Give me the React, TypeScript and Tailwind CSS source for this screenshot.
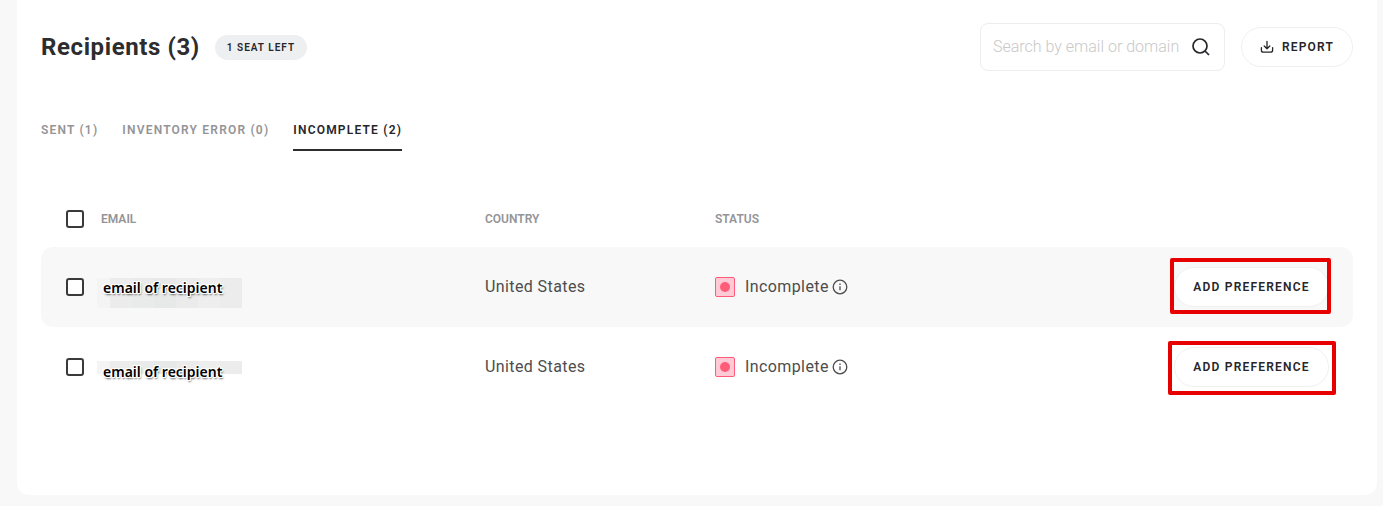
import { useState } from "react";
import clsx from "clsx";

interface Tab {
  id: string;
  label: string;
  count: number;
}

interface Recipient {
  id: number;
  email: string;
  country: string;
  status: string;
  /** Placement of the redaction strip behind the email. */
  mask: string;
  /** Extra shift of the caption that covers the masked email. */
  caption: string;
  /** Placement of the red callout around the row's button. */
  callout: string;
}

const TABS: Tab[] = [
  { id: "sent", label: "Sent", count: 1 },
  { id: "inventory", label: "Inventory error", count: 0 },
  { id: "incomplete", label: "Incomplete", count: 2 },
];

const RECIPIENTS: Recipient[] = [
  {
    id: 1,
    email: "email of recipient",
    country: "United States",
    status: "Incomplete",
    mask: "top-[31px] h-[30px]",
    caption: "pt-[2px]",
    callout: "-top-[9px] -bottom-[7px] -left-1 -right-[2px]",
  },
  {
    id: 2,
    email: "email of recipient",
    country: "United States",
    status: "Incomplete",
    mask: "top-[34px] h-[13px]",
    caption: "pt-[10px]",
    callout: "-top-[6px] -bottom-[8px] -left-[6px] -right-[7px]",
  },
];

const MASK_BLOCKS = [
  "w-[13px] bg-[#f4f4f4]",
  "w-[22px] bg-[#ececec]",
  "w-[22px] bg-[#e9ebea]",
  "w-[22px] bg-[#e7e8e8]",
  "w-[22px] bg-[#ebebeb]",
  "w-[22px] bg-[#eeeeee]",
  "w-[22px] bg-[#ececec]",
];

// White outline plus a soft drop shadow under the caption.
const CAPTION_SHADOW =
  "[text-shadow:1px_0_0_#fff,-1px_0_0_#fff,0_1px_0_#fff,0_-1px_0_#fff,1px_1px_0_#fff,-1px_1px_0_#fff,1px_-1px_0_#fff,-1px_-1px_0_#fff,1px_2px_2px_#555]";

function Checkbox({ label }: { label: string }) {
  return (
    <input
      type="checkbox"
      aria-label={label}
      className="block size-[18px] appearance-none rounded-[3px] border-2 border-[#3a393c] bg-white checked:bg-[#2d2c2f]"
    />
  );
}

function SearchIcon() {
  return (
    <svg viewBox="0 0 18 18" className="size-[18px]" fill="none" stroke="#262529" strokeWidth="1.7" aria-hidden>
      <circle cx="8" cy="8" r="7" />
      <path d="M13 13l4 4" />
    </svg>
  );
}

function DownloadIcon() {
  return (
    <svg
      viewBox="0 0 14 14"
      className="size-[14px]"
      fill="none"
      stroke="#262529"
      strokeWidth="1.3"
      strokeLinecap="round"
      strokeLinejoin="round"
      aria-hidden
    >
      <path d="M7 1.5v7M4.2 6L7 8.7 9.8 6M1.4 7.6v2.6a2 2 0 002 2h7.2a2 2 0 002-2V7.6" />
    </svg>
  );
}

function InfoIcon() {
  return (
    <svg viewBox="0 0 16 16" className="size-4" fill="none" stroke="#4d4d4d" strokeWidth="1.3" aria-hidden>
      <circle cx="8" cy="8" r="6.8" />
      <path d="M8 7.2v4.1M8 4.6v1.5" />
    </svg>
  );
}

function StatusMark() {
  return (
    <span className="grid size-5 place-items-center rounded-xs border border-[#ff5c7a] bg-[#ffcad6]">
      <span className="size-[10px] rounded-full bg-[#ff5c78]" />
    </span>
  );
}

function RecipientRow({ recipient }: { recipient: Recipient }) {
  return (
    <tr className="h-20 odd:bg-[#f8f8f8]">
      <td className="rounded-l-xl pl-[25px]">
        <Checkbox label={`Select recipient ${recipient.id}`} />
      </td>
      <td className="relative">
        <span aria-hidden className={clsx("absolute -left-1 flex", recipient.mask)}>
          {MASK_BLOCKS.map((block, i) => (
            <span key={i} className={block} />
          ))}
        </span>
        <span
          className={clsx(
            "relative block pl-[2px] font-['Noto_Sans','Open_Sans',sans-serif] text-sm font-semibold tracking-normal text-black",
            CAPTION_SHADOW,
            recipient.caption,
          )}
        >
          {recipient.email}
        </span>
      </td>
      <td>{recipient.country}</td>
      <td>
        <div className="flex items-center">
          <StatusMark />
          <span className="ml-[10px]">{recipient.status}</span>
          <button type="button" aria-label="Status details" className="ml-[3px]">
            <InfoIcon />
          </button>
        </div>
      </td>
      <td className="rounded-r-xl pr-6">
        <div className="relative ml-auto w-[155px]">
          <button
            type="button"
            className="h-10 w-full rounded-full border border-[#f0f0f0] bg-white text-xs font-semibold tracking-widest text-[#262529] uppercase"
          >
            Add preference
          </button>
          <span
            aria-hidden
            className={clsx("pointer-events-none absolute rounded-xs border-4 border-[#e60000]", recipient.callout)}
          />
        </div>
      </td>
    </tr>
  );
}

export default function App() {
  const [activeTab, setActiveTab] = useState("incomplete");
  const [query, setQuery] = useState("");

  return (
    <main className="min-h-screen bg-[#f8f8f8] pr-[6px] pb-[11px] pl-[17px] font-[Roboto,sans-serif] text-[#4d4d4d]">
      <section className="rounded-b-xl bg-white px-6 pt-[23px] pb-[88px]">
        <header className="flex items-center">
          <h1 className="text-2xl font-bold tracking-wide text-[#2d2c2f]">Recipients (3)</h1>
          <span className="ml-[15px] rounded-full bg-[#eeeff1] px-3 text-[10px] leading-[25px] font-semibold tracking-widest text-[#262529] uppercase">
            1 seat left
          </span>
          <label className="ml-auto flex h-12 w-[245px] items-center rounded-lg border border-[#ededed] pr-[14px] pl-3">
            <input
              type="text"
              aria-label="Search by email or domain"
              placeholder="Search by email or domain"
              value={query}
              onChange={(e) => setQuery(e.target.value)}
              className="min-w-0 flex-1 text-base font-light outline-none placeholder:text-[#c8c8c8]"
            />
            <SearchIcon />
          </label>
          <button
            type="button"
            className="ml-4 flex h-10 w-28 items-center justify-center gap-2 rounded-full border border-[#f0f0f0] text-xs font-semibold tracking-widest text-[#262529] uppercase"
          >
            <DownloadIcon />
            Report
          </button>
        </header>

        <nav role="tablist" className="mt-[49px] flex gap-6">
          {TABS.map((tab) => (
            <button
              key={tab.id}
              type="button"
              role="tab"
              aria-selected={tab.id === activeTab}
              onClick={() => setActiveTab(tab.id)}
              className={clsx(
                "border-b-2 pb-[9px] text-xs leading-5 font-semibold tracking-widest uppercase",
                tab.id === activeTab ? "border-[#2d2c2f] text-[#262529]" : "border-transparent text-[#949497]",
              )}
            >
              {tab.label} ({tab.count})
            </button>
          ))}
        </nav>

        <table className="mt-10 w-full table-fixed border-separate border-spacing-0 text-left">
          <thead>
            <tr className="h-14 text-xs text-[#949497] uppercase">
              <th className="w-[60px] pl-[25px]">
                <Checkbox label="Select all recipients" />
              </th>
              <th className="w-96 font-semibold">Email</th>
              <th className="w-[230px] font-semibold">Country</th>
              <th className="font-semibold">Status</th>
              <th className="w-[220px]" aria-label="Actions" />
            </tr>
          </thead>
          <tbody className="tracking-wide">
            {RECIPIENTS.map((r) => (
              <RecipientRow key={r.id} recipient={r} />
            ))}
          </tbody>
        </table>
      </section>
    </main>
  );
}
